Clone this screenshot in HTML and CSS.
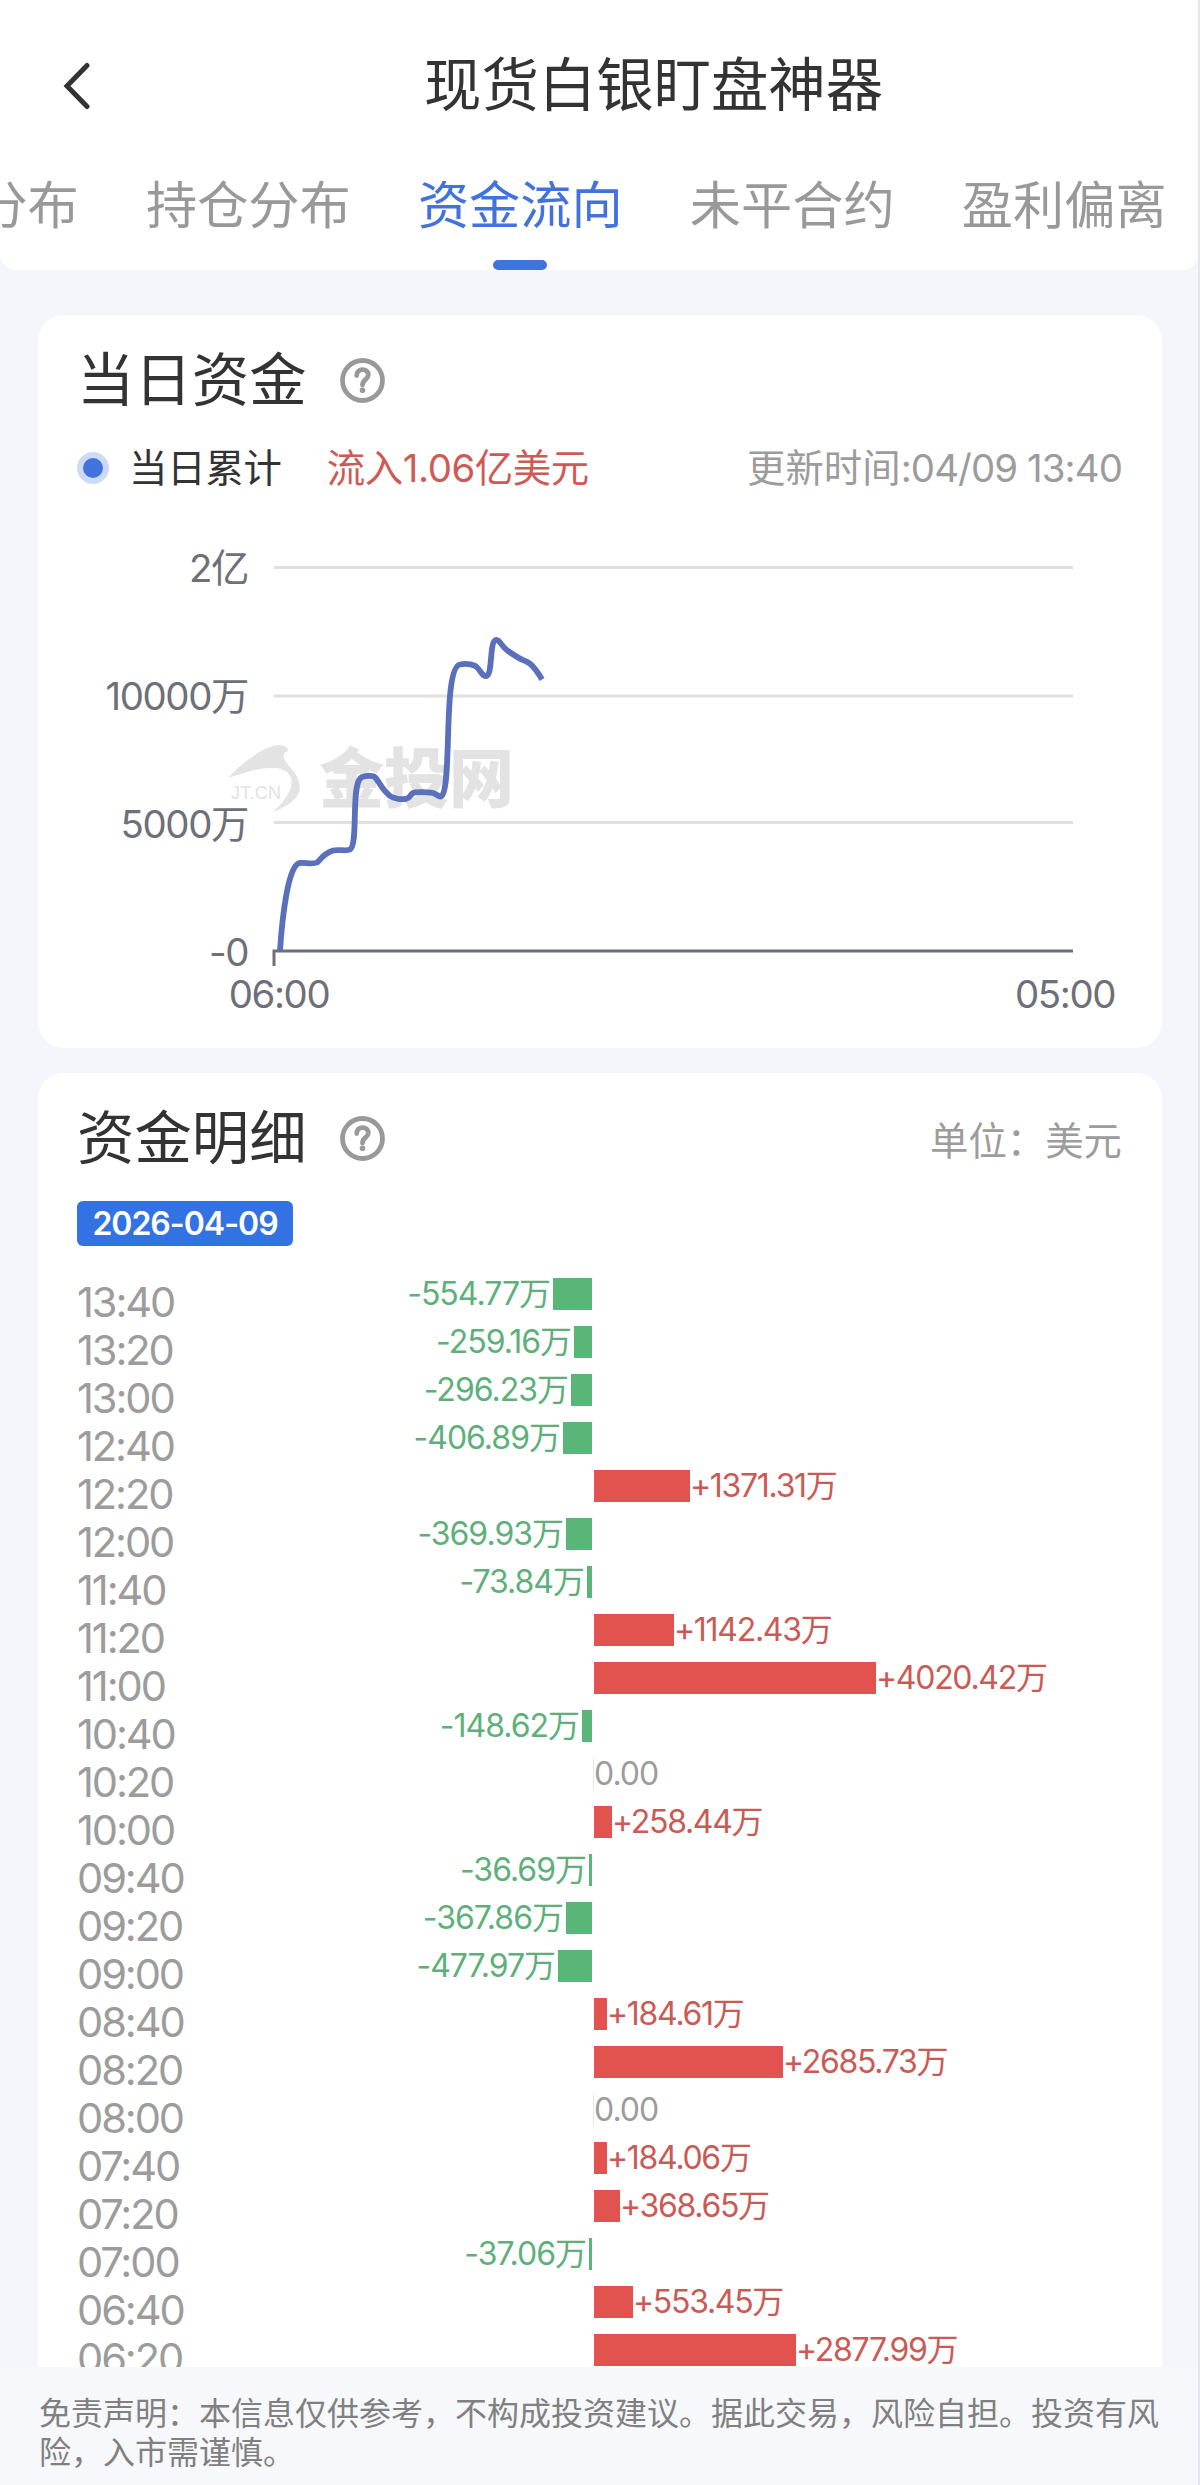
FILE: index.html
```html
<!DOCTYPE html>
<html lang="zh-CN">
<head>
    <meta charset="UTF-8">
    <meta name="viewport" content="width=device-width, initial-scale=1.0">
    <title>现货白银盯盘神器</title>
    <link rel="stylesheet" href="styles.css">
</head>
<body>
    <header class="header">
        <div class="nav-bar">
            <svg class="back-icon" viewBox="0 0 28 48">
                <path d="M24 3.5 L4 24 L24 44.5" />
            </svg>
            <h1 class="nav-title">现货白银盯盘神器</h1>
        </div>
        <nav class="tabs">
            <a class="tab">多空分布</a>
            <a class="tab">持仓分布</a>
            <a class="tab active">资金流向</a>
            <a class="tab">未平合约</a>
            <a class="tab">盈利偏离</a>
        </nav>
    </header>

    <main class="content">
        <section class="card">
            <div class="card-head">
                <h2 class="card-title">当日资金</h2>
                <svg class="help-icon" viewBox="0 0 45 45">
                    <circle cx="22.5" cy="22.5" r="20" />
                    <path d="M16.7 17.5 C16.7 9.8 28.3 9.8 28.3 17 C28.3 21.5 22.5 21.5 22.5 27" />
                    <circle class="help-dot" cx="22.5" cy="32.3" r="2.8" />
                </svg>
            </div>
            <div class="legend">
                <span class="legend-dot"></span>
                <span class="legend-name">当日累计</span>
                <span class="legend-value">流入1.06亿美元</span>
                <span class="update-time">更新时间<span class="digits">:04/09 13:40</span></span>
            </div>
            <svg class="line-chart" viewBox="0 0 1124 528">
                <g class="grid">
                    <path d="M236 47.5 H1035" />
                    <path d="M236 176 H1035" />
                    <path d="M236 302.5 H1035" />
                </g>
                <g class="watermark">
                    <path d="M190 258 C206 240 228 226 240 225 C248 225 250 228 250 231 C243 234 245 239 252 247 C268 265 266 280 235 292 C250 278 260 262 249 252 C236 242 210 252 190 258 Z" />
                    <text class="mark-en" x="193" y="279" textLength="50">JT.CN</text>
                    <text class="mark-cn" x="281" y="282" textLength="195">金投网</text>
                </g>
                <g class="axis">
                    <path d="M236 446 V431 H1035" />
                </g>
                <g class="labels">
                    <text x="210" y="62" text-anchor="end">2亿</text>
                    <text x="210" y="190" text-anchor="end">10000万</text>
                    <text x="210" y="318" text-anchor="end">5000万</text>
                    <text x="210" y="446" text-anchor="end">-0</text>
                    <text x="241" y="488" text-anchor="middle">06:00</text>
                    <text x="1027" y="488" text-anchor="middle">05:00</text>
                </g>
                <path class="series" d="M242 431 C244 400 250 343 262 343 C268 342.5 275 344.5 279 342.5 C284 339 283 335 295 330.5 C300 329 308 331.5 312 329.5 C321 324 312 262 324 257 C327 256 333 255.5 336 256.5 C341 260 342 268 352 276 C356 279 364 279.5 368 279 C373 278 372 273 377 272.4 C382 272 388 272 393 272.7 C398 273 400 277 403 276.5 C415 270 404 148 422 144.5 C427 143.5 434 144.5 437.5 146 C443 150 444 157 448.5 156 C455 154 451 120 458.5 119.8 C462 120 463 126 470 131 C476 135 480 138 485 140 C489 142 489 141.5 491.5 143.3 C496 147 499 151 504 159.4" />
            </svg>
        </section>

        <section class="card detail-card">
            <div class="card-head">
                <h2 class="card-title">资金明细</h2>
                <svg class="help-icon" viewBox="0 0 45 45">
                    <circle cx="22.5" cy="22.5" r="20" />
                    <path d="M16.7 17.5 C16.7 9.8 28.3 9.8 28.3 17 C28.3 21.5 22.5 21.5 22.5 27" />
                    <circle class="help-dot" cx="22.5" cy="32.3" r="2.8" />
                </svg>
                <span class="unit">单位：美元</span>
            </div>
            <div class="date-tag">2026-04-09</div>
            <div class="detail">
                <div class="times" id="times"></div>
                <div class="bars" id="bars"></div>
            </div>
        </section>
    </main>

    <footer class="disclaimer">免责声明：本信息仅供参考，不构成投资建议。据此交易，风险自担。投资有风险，入市需谨慎。</footer>

    <script src="script.js"></script>
</body>
</html>
```
FILE: styles.css
```css
* {
    margin: 0;
    padding: 0;
    box-sizing: border-box;
}

body {
    width: 1200px;
    height: 2485px;
    overflow: hidden;
    display: flex;
    flex-direction: column;
    background: #f5f6fc;
    border-right: 2px solid #e3e6ee;
    font-family: Inter, 'Noto Sans CJK SC', sans-serif;
    color: #333;
}

.header {
    height: 270px;
    flex: none;
    background: #fff;
    border-radius: 0 0 16px 16px;
    overflow: hidden;
}

.nav-bar {
    display: flex;
    align-items: center;
    height: 172px;
    padding-left: 63px;
}

.back-icon {
    width: 28px;
    height: 48px;
    fill: none;
    stroke: #333;
    stroke-width: 5;
    stroke-linecap: round;
}

.nav-title {
    margin: 0 0 3px 333px;
    font-size: 57.4px;
    font-weight: 400;
    line-height: 60px;
}

.tabs {
    display: flex;
    gap: 67.2px;
    height: 98px;
    margin-left: -126px;
}

.tab {
    flex: none;
    display: flex;
    flex-direction: column;
    align-items: center;
    justify-content: space-between;
    font-size: 51.2px;
    line-height: 66px;
    white-space: nowrap;
    color: #999;
}

.tab.active {
    color: #4272de;
}

.tab.active::after {
    content: '';
    width: 54px;
    height: 10px;
    border-radius: 5px;
    background: #4272de;
}

.content {
    flex: 1;
    min-height: 0;
    padding: 45px 36px 0 38px;
    display: flex;
    flex-direction: column;
    gap: 25px;
    overflow: hidden;
}

.card {
    background: #fff;
    border-radius: 26px;
    height: 733px;
    flex: none;
}

.card-head {
    display: flex;
    align-items: center;
    height: 130px;
    padding: 0 40px 0 39px;
}

.card-title {
    font-size: 57.4px;
    font-weight: 400;
    line-height: 60px;
}

.help-icon {
    width: 45px;
    height: 45px;
    margin-left: 33px;
    fill: none;
    stroke: #999;
    stroke-width: 4.8;
    stroke-linecap: round;
}

.help-icon .help-dot {
    fill: #999;
    stroke: none;
}

.legend {
    display: flex;
    align-items: center;
    height: 44px;
    margin-top: 1px;
    padding: 0 40px 0 39px;
    font-size: 38.4px;
    line-height: 44px;
    white-space: nowrap;
}

.legend-dot {
    width: 32px;
    height: 32px;
    border: 6px solid #cddaf6;
    border-radius: 50%;
    background: #4272de;
}

.legend-name {
    margin-left: 20px;
    letter-spacing: -0.2px;
}

.legend-value {
    margin-left: 45px;
    letter-spacing: -0.4px;
    color: #cf5a55;
}

.update-time {
    margin-left: auto;
    color: #9c9c9c;
}

.update-time .digits {
    letter-spacing: -0.9px;
}

.line-chart {
    display: block;
    width: 1124px;
    height: 528px;
    margin-top: 30px;
}

.grid path {
    stroke: #e0e0e0;
    stroke-width: 3;
}

.axis path {
    fill: none;
    stroke: #6e7079;
    stroke-width: 3;
}

.labels text {
    font-size: 38.4px;
    letter-spacing: -1.4px;
    fill: #6e7079;
}

.series {
    fill: none;
    stroke: #5a70bd;
    stroke-width: 5.8;
}

.watermark {
    fill: #e3e3e3;
}

.mark-en {
    font-family: 'Liberation Sans', sans-serif;
    font-size: 18px;
}

.mark-cn {
    font-size: 65px;
    font-weight: 900;
}

.detail-card {
    flex: 1;
    height: auto;
    min-height: 0;
    border-radius: 26px 26px 0 0;
    overflow: hidden;
}

.unit {
    margin-left: auto;
    font-size: 38.4px;
    color: #9c9c9c;
}

.date-tag {
    width: 216px;
    height: 45px;
    margin: -2px 0 0 39px;
    border-radius: 6px;
    background: #3272e3;
    color: #fff;
    font-size: 32px;
    font-weight: 600;
    letter-spacing: -1px;
    line-height: 45px;
    text-align: center;
}

.detail {
    display: flex;
    margin-top: 24px;
    padding-left: 39px;
}

.times {
    width: 130px;
    padding-top: 8px;
    font-size: 41.6px;
    letter-spacing: -2.1px;
    line-height: 48px;
    color: #9c9c9c;
}

.bars {
    flex: 1;
}

.bar-row {
    display: flex;
    align-items: center;
    height: 48px;
    font-size: 32px;
    letter-spacing: -1px;
    line-height: 44px;
    white-space: nowrap;
}

.side {
    display: flex;
    align-items: center;
}

.side.left {
    width: 385px;
    margin-right: 1px;
    justify-content: flex-end;
    gap: 3px;
}

.bar {
    height: 32px;
}

.fall {
    color: #5db07a;
}

.fall .bar {
    background: #5ab678;
}

.rise {
    margin-left: 1px;
    letter-spacing: -1.3px;
    color: #cb5a55;
}

.rise .bar {
    background: #e2524f;
}

.flat {
    color: #9c9c9c;
}

.flat .bar {
    width: 1px;
    background: #e6e6e6;
}

.disclaimer {
    flex: none;
    height: 118px;
    padding: 27px 36px 0 39px;
    background: #f6f8fb;
    font-size: 32px;
    line-height: 39px;
    color: #808080;
}
```
FILE: script.js
```javascript
const flows = [
    ['13:40', -554.77],
    ['13:20', -259.16],
    ['13:00', -296.23],
    ['12:40', -406.89],
    ['12:20', 1371.31],
    ['12:00', -369.93],
    ['11:40', -73.84],
    ['11:20', 1142.43],
    ['11:00', 4020.42],
    ['10:40', -148.62],
    ['10:20', 0],
    ['10:00', 258.44],
    ['09:40', -36.69],
    ['09:20', -367.86],
    ['09:00', -477.97],
    ['08:40', 184.61],
    ['08:20', 2685.73],
    ['08:00', 0],
    ['07:40', 184.06],
    ['07:20', 368.65],
    ['07:00', -37.06],
    ['06:40', 553.45],
    ['06:20', 2877.99]
];

// px per 万
const SCALE = 0.0702;

const times = document.getElementById('times');
const bars = document.getElementById('bars');

flows.forEach(([time, value]) => {
    times.insertAdjacentHTML('beforeend', `<div>${time}</div>`);

    const width = Math.round(Math.abs(value) * SCALE);
    let left = '';
    let right = '';

    if (value < 0) {
        left = `<span>${value.toFixed(2)}万</span><i class="bar" style="width:${width}px"></i>`;
    } else if (value > 0) {
        right = `<div class="side rise"><i class="bar" style="width:${width}px"></i><span>+${value.toFixed(2)}万</span></div>`;
    } else {
        right = '<div class="side flat"><i class="bar"></i><span>0.00</span></div>';
    }

    bars.insertAdjacentHTML('beforeend',
        `<div class="bar-row"><div class="side left fall">${left}</div>${right}</div>`);
});
```
